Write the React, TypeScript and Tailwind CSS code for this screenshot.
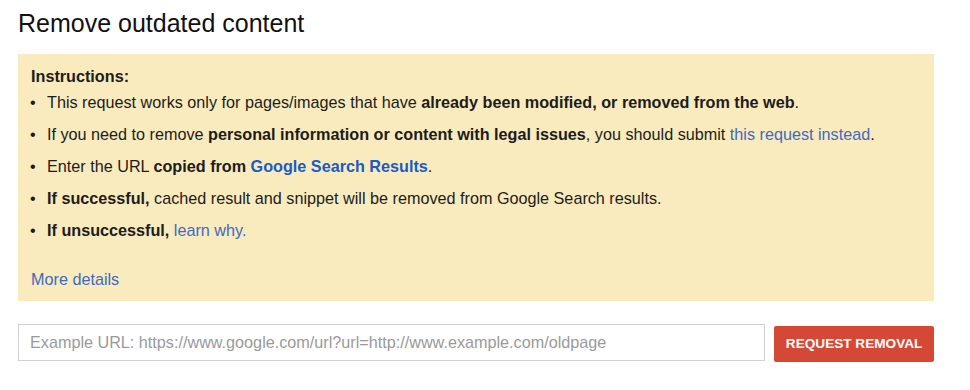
import React from "react";

export default function App() {
  const font = { fontFamily: '"Liberation Sans", Arial, sans-serif' };
  return (
    <div className="w-[970px] h-[390px] bg-white text-[#222]" style={font}>
      <div className="pl-[18px] pt-[8px] pr-[36px]">
        <h1 className="text-[25px] leading-[30px] text-[#111] font-normal">Remove outdated content</h1>
        <div className="mt-[16px] bg-[#f9ebbd] pl-[13px] pr-4 pt-[13px] pb-[10px] text-[16.2px] text-[#1c1c1c]">
          <div className="font-bold leading-[18px]">Instructions:</div>
          <ul className="mt-[1px]">
            <li className="flex leading-[32px]">
              <span className="w-[16px] -ml-[1px] mr-[1px]">•</span>
              <span>This request works only for pages/images that have <b>already been modified, or removed from the web</b>.</span>
            </li>
            <li className="flex leading-[32px]">
              <span className="w-[16px] -ml-[1px] mr-[1px]">•</span>
              <span>If you need to remove <b>personal information or content with legal issues</b>, you should submit <a className="text-[#4169c4]">this request instead</a>.</span>
            </li>
            <li className="flex leading-[32px]">
              <span className="w-[16px] -ml-[1px] mr-[1px]">•</span>
              <span>Enter the URL <b>copied from <span className="text-[#1a5bc5]">Google Search Results</span></b>.</span>
            </li>
            <li className="flex leading-[32px]">
              <span className="w-[16px] -ml-[1px] mr-[1px]">•</span>
              <span><b>If successful,</b> cached result and snippet will be removed from Google Search results.</span>
            </li>
            <li className="flex leading-[32px]">
              <span className="w-[16px] -ml-[1px] mr-[1px]">•</span>
              <span><b>If unsuccessful,</b> <a className="text-[#4169c4]">learn why.</a></span>
            </li>
          </ul>
          <div className="mt-[21px] leading-[24px] text-[#4169c4]">More details</div>
        </div>
        <div className="mt-[23px] flex items-start gap-[9px]">
          <div className="w-[748px] h-[37px] border border-[#d0d0d0] flex items-center pl-[11px] text-[#9a9a9a] text-[16.2px]">
            Example URL: https://www.google.com/url?url=http://www.example.com/oldpage
          </div>
          <button className="mt-[2px] h-[36px] w-[160px] rounded-[2px] bg-[#d64836] text-white font-bold text-[13.6px]">
            REQUEST REMOVAL
          </button>
        </div>
      </div>
    </div>
  );
}
